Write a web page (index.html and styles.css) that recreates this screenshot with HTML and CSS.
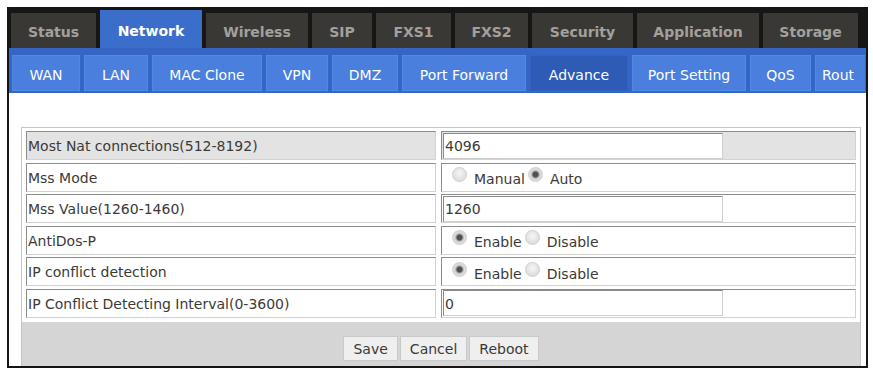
FILE: index.html
```html
<!DOCTYPE html>
<html>
<head>
<meta charset="utf-8">
<link rel="stylesheet" href="styles.css">
</head>
<body>
<div class="frame">
  <div class="topnav">
    <div class="tab">Status</div>
    <div class="tab active">Network</div>
    <div class="tab">Wireless</div>
    <div class="tab">SIP</div>
    <div class="tab">FXS1</div>
    <div class="tab">FXS2</div>
    <div class="tab">Security</div>
    <div class="tab">Application</div>
    <div class="tab">Storage</div>
  </div>
  <div class="subnav">
    <div class="subtab">WAN</div>
    <div class="subtab">LAN</div>
    <div class="subtab">MAC Clone</div>
    <div class="subtab">VPN</div>
    <div class="subtab">DMZ</div>
    <div class="subtab">Port Forward</div>
    <div class="subtab active">Advance</div>
    <div class="subtab">Port Setting</div>
    <div class="subtab">QoS</div>
    <div class="subtab last">Rout</div>
  </div>
  <div class="content">
    <div class="panel">
      <div class="settings">
        <div class="cell label shaded">Most Nat connections(512-8192)</div>
        <div class="cell value shaded"><input class="field" type="text" value="4096"></div>

        <div class="cell label">Mss Mode</div>
        <div class="cell value">
          <label class="opt"><input class="radio" type="radio" name="mss"><span>Manual</span></label>
          <label class="opt"><input class="radio" type="radio" name="mss" checked><span>Auto</span></label>
        </div>

        <div class="cell label">Mss Value(1260-1460)</div>
        <div class="cell value"><input class="field" type="text" value="1260"></div>

        <div class="cell label">AntiDos-P</div>
        <div class="cell value">
          <label class="opt"><input class="radio" type="radio" name="dos" checked><span>Enable</span></label>
          <label class="opt"><input class="radio" type="radio" name="dos"><span>Disable</span></label>
        </div>

        <div class="cell label">IP conflict detection</div>
        <div class="cell value">
          <label class="opt"><input class="radio" type="radio" name="ipc" checked><span>Enable</span></label>
          <label class="opt"><input class="radio" type="radio" name="ipc"><span>Disable</span></label>
        </div>

        <div class="cell label">IP Conflict Detecting Interval(0-3600)</div>
        <div class="cell value"><input class="field" type="text" value="0"></div>
      </div>
      <div class="actions">
        <button class="btn">Save</button>
        <button class="btn">Cancel</button>
        <button class="btn">Reboot</button>
      </div>
    </div>
  </div>
</div>
</body>
</html>
```
FILE: styles.css
```css
html, body {
  margin: 0;
  padding: 0;
  background: #ffffff;
}

.frame {
  margin: 7px 0 0 7px;
  width: 861px;
  height: 361px;
  box-sizing: border-box;
  border: 2px solid #151515;
  display: flex;
  flex-direction: column;
  overflow: hidden;
  font-family: "DejaVu Sans", Verdana, sans-serif;
}

.topnav {
  flex: none;
  height: 39px;
  background: #171615;
  display: grid;
  grid-template-columns: 85px 102px 102px 60px 75px 73px 101px 122px 95px;
  column-gap: 4px;
  padding-left: 2px;
  align-items: end;
}

.tab {
  height: 35px;
  box-sizing: border-box;
  padding-top: 3px;
  background: #3a3835;
  color: #a2a09d;
  font-weight: bold;
  font-size: 14px;
  display: flex;
  align-items: center;
  justify-content: center;
  white-space: nowrap;
}

.tab.active {
  height: 38px;
  background: #3b6dcb;
  color: #ffffff;
}

.subnav {
  flex: none;
  height: 45px;
  box-sizing: border-box;
  background: #3565c6;
  display: grid;
  grid-auto-flow: column;
  grid-template-columns: 68px 64px 110px 62px 66px 124px 98px 114px 61px 50px;
  column-gap: 4px;
  padding: 7px 0 2px 3px;
  overflow: hidden;
}

.subtab {
  height: 36px;
  box-sizing: border-box;
  padding-top: 4px;
  background: #4a7fdd;
  border: 1px solid #5189e4;
  color: #ffffff;
  font-size: 14px;
  display: flex;
  align-items: center;
  justify-content: center;
  white-space: nowrap;
  overflow: hidden;
}

.subtab.last {
  justify-content: flex-start;
  padding-left: 6px;
  border-right: none;
}

.subtab.active {
  background: #2d5bb6;
  border-color: #3463be;
}

.content {
  flex: 1;
  background: #ffffff;
  padding: 34px 5px 0 12px;
}

.panel {
  border: 1px solid #c6c6c6;
  border-bottom: none;
  height: 100%;
  box-sizing: border-box;
  display: flex;
  flex-direction: column;
}

.settings {
  display: grid;
  grid-template-columns: 410px 415px;
  column-gap: 5px;
  row-gap: 2.6px;
  padding: 3px 4px 4px 4px;
}

.cell {
  height: 29px;
  box-sizing: border-box;
  border: 1px solid;
  border-color: #8c8c8c #d2d2d2 #d2d2d2 #8c8c8c;
  display: flex;
  align-items: center;
  font-size: 14px;
  color: #3b3a36;
  background: #ffffff;
  white-space: nowrap;
}

.label {
  padding-left: 1px;
  padding-top: 1px;
}

.cell.shaded {
  background: #e3e3e3;
}

.value {
  padding-left: 1px;
}

.field {
  width: 280px;
  height: 26px;
  box-sizing: border-box;
  margin: 0;
  border: 1px solid;
  border-color: #8a8a8a #cfcfcf #cfcfcf #8a8a8a;
  background: #ffffff;
  padding: 1px 0 0 1px;
  font-family: "DejaVu Sans", Verdana, sans-serif;
  font-size: 14px;
  color: #3b3a36;
  outline: none;
}

.opt {
  display: flex;
  align-items: center;
  margin-right: 3px;
}

.opt:first-child {
  margin-left: 9px;
}

.radio {
  appearance: none;
  -webkit-appearance: none;
  width: 15px;
  height: 15px;
  margin: 0 7px 5px 0;
  border-radius: 50%;
  border: 1px solid #cfcfcf;
  background: radial-gradient(circle at 50% 40%, #f6f6f6 0, #dedede 70%, #d0d0d0 100%);
  box-sizing: border-box;
}

.radio:checked {
  background: radial-gradient(circle, #505050 0, #505050 2.5px, #a8a8a8 3.5px, #dcdcdc 5px, #d2d2d2 100%);
}

.opt span {
  padding-top: 4px;
}

.actions {
  flex: 1;
  background: #d5d5d5;
  display: flex;
  justify-content: center;
  align-items: flex-end;
  gap: 2px;
  padding-bottom: 5px;
}

.btn {
  height: 25px;
  padding: 0 9px;
  margin: 0;
  font-family: "DejaVu Sans", Verdana, sans-serif;
  font-size: 14px;
  color: #3b3a36;
  background: #efefef;
  border: 1px solid #c9c9c9;
  border-radius: 0;
}
```
